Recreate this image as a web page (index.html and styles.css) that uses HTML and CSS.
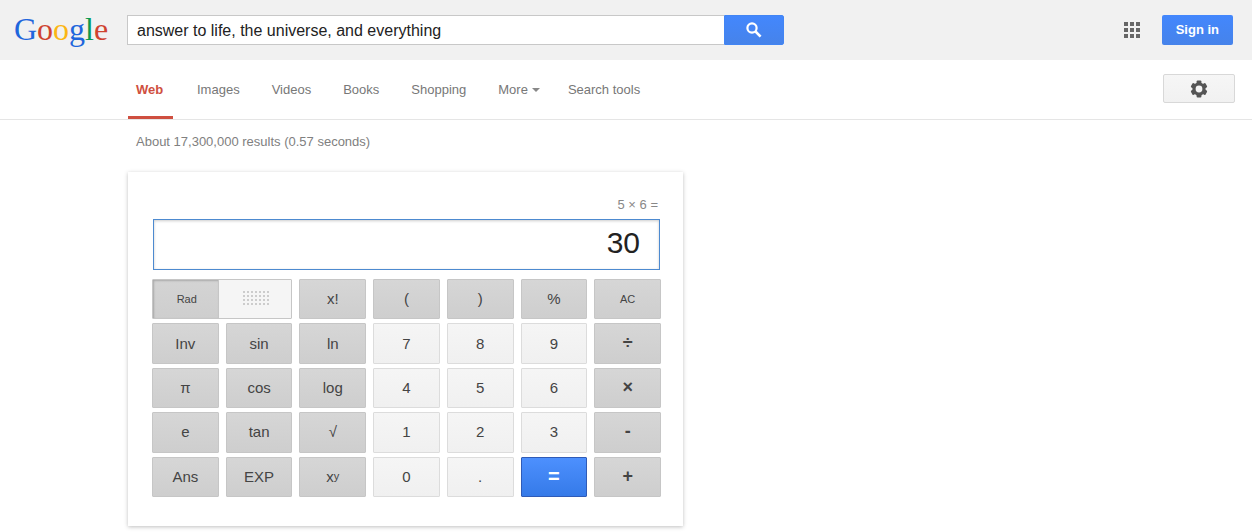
FILE: index.html
```html
<!DOCTYPE html>
<html lang="en">
<head>
    <meta charset="UTF-8">
    <meta name="viewport" content="width=device-width, initial-scale=1.0">
    <title>answer to life, the universe, and everything - Google Search</title>
    <link rel="stylesheet" href="styles.css">
</head>
<body>

    <header class="top-bar">
        <a class="logo" href="#"><span class="blue">G</span><span class="red">o</span><span class="yellow">o</span><span class="blue">g</span><span class="green">l</span><span class="red">e</span></a>

        <form class="search">
            <input class="search-box" type="text" aria-label="Search" value="answer to life, the universe, and everything">
            <button class="search-btn" type="submit" aria-label="Search">
                <svg width="16" height="16" viewBox="0 0 16 16">
                    <circle cx="6" cy="6" r="4.6" fill="none" stroke="#fff" stroke-width="2.2"/>
                    <path d="M9 9 L14.6 14.6" stroke="#fff" stroke-width="2.6"/>
                </svg>
            </button>
        </form>

        <div class="account">
            <button class="apps-btn" type="button" aria-label="Apps">
                <svg width="16" height="16" viewBox="0 0 16 16" fill="#666">
                    <path d="M0 0h4v4H0zM6 0h4v4H6zM12 0h4v4h-4zM0 6h4v4H0zM6 6h4v4H6zM12 6h4v4h-4zM0 12h4v4H0zM6 12h4v4H6zM12 12h4v4h-4z"/>
                </svg>
            </button>
            <a class="sign-in" href="#">Sign in</a>
        </div>
    </header>

    <div class="nav-bar">
        <nav class="tabs">
            <a class="tab active" href="#">Web</a>
            <a class="tab" href="#">Images</a>
            <a class="tab" href="#">Videos</a>
            <a class="tab" href="#">Books</a>
            <a class="tab" href="#">Shopping</a>
            <a class="tab more" href="#">More</a>
            <a class="tab" href="#">Search tools</a>
        </nav>
        <button class="settings-btn" type="button" aria-label="Settings">
            <svg width="18" height="18" viewBox="0 0 18 18">
                <g fill="#555">
                    <rect x="6.6" y="0.6" width="4.8" height="16.8" rx="1"/>
                    <rect x="6.6" y="0.6" width="4.8" height="16.8" rx="1" transform="rotate(60 9 9)"/>
                    <rect x="6.6" y="0.6" width="4.8" height="16.8" rx="1" transform="rotate(120 9 9)"/>
                    <circle cx="9" cy="9" r="6.6"/>
                </g>
                <circle cx="9" cy="9" r="3.4" fill="#f4f4f4"/>
            </svg>
        </button>
    </div>

    <main class="results">
        <p class="stats">About 17,300,000 results (0.57 seconds)</p>

        <section class="calculator">
            <label class="expression" for="display">5 × 6 =</label>
            <input class="display" id="display" type="text" value="30" readonly>

            <div class="keys">
                <div class="angle">
                    <button class="angle-on" type="button">Rad</button>
                    <button class="angle-off" type="button" aria-label="Degrees"><span class="grip"></span></button>
                </div>
                <button class="key" type="button">x!</button>
                <button class="key" type="button">(</button>
                <button class="key" type="button">)</button>
                <button class="key" type="button">%</button>
                <button class="key small" type="button">AC</button>

                <button class="key" type="button">Inv</button>
                <button class="key" type="button">sin</button>
                <button class="key" type="button">ln</button>
                <button class="key number" type="button">7</button>
                <button class="key number" type="button">8</button>
                <button class="key number" type="button">9</button>
                <button class="key operator" type="button">÷</button>

                <button class="key" type="button">π</button>
                <button class="key" type="button">cos</button>
                <button class="key" type="button">log</button>
                <button class="key number" type="button">4</button>
                <button class="key number" type="button">5</button>
                <button class="key number" type="button">6</button>
                <button class="key operator" type="button">×</button>

                <button class="key" type="button">e</button>
                <button class="key" type="button">tan</button>
                <button class="key" type="button">√</button>
                <button class="key number" type="button">1</button>
                <button class="key number" type="button">2</button>
                <button class="key number" type="button">3</button>
                <button class="key operator" type="button">-</button>

                <button class="key" type="button">Ans</button>
                <button class="key" type="button">EXP</button>
                <button class="key" type="button">x<span class="power">y</span></button>
                <button class="key number" type="button">0</button>
                <button class="key number" type="button">.</button>
                <button class="key equals" type="button">=</button>
                <button class="key operator" type="button">+</button>
            </div>
        </section>
    </main>

</body>
</html>
```
FILE: styles.css
```css
* { box-sizing: border-box; }

body {
    margin: 0;
    font-family: "Liberation Sans", Arial, sans-serif;
    font-size: 13px;
    color: #222;
    background: white;
}

a { text-decoration: none; }

button {
    padding: 0;
    font-family: inherit;
    cursor: pointer;
}

svg { display: block; }

/* Top bar */
.top-bar {
    display: flex;
    align-items: center;
    height: 60px;
    padding-left: 14px;
    padding-right: 19px;
    background: #f1f1f1;
}
.logo {
    flex: 0 0 113px;
    padding-bottom: 2px;
    font-family: "Liberation Serif", "Times New Roman", serif;
    font-size: 32px;
    line-height: 36px;
}
.blue { color: #1f66dc; }
.red { color: #cf4330; }
.yellow { color: #fbb614; }
.green { color: #0a9a51; }

.search {
    display: flex;
    flex: 0 1 657px;
    height: 30px;
}
.search-box {
    flex: 1;
    min-width: 0;
    padding: 2px 9px 0;
    border: 1px solid #c8c8c8;
    border-right: none;
    font-family: inherit;
    font-size: 16px;
    color: #222;
    background: white;
}
.search-btn {
    display: flex;
    align-items: center;
    justify-content: center;
    width: 60px;
    border: 1px solid #4285f4;
    border-radius: 0 2px 2px 0;
    background: linear-gradient(#4387fd, #4683ea);
}
.account {
    display: flex;
    align-items: center;
    gap: 22px;
    margin-left: auto;
}
.apps-btn {
    border: none;
    background: none;
}
.sign-in {
    padding: 0 14px;
    border-radius: 2px;
    font-weight: bold;
    line-height: 30px;
    color: white;
    background: linear-gradient(#4387fd, #4683ea);
}

/* Tabs */
.nav-bar {
    display: flex;
    align-items: center;
    justify-content: space-between;
    height: 60px;
    padding-left: 128px;
    padding-right: 17px;
    border-bottom: 1px solid #e5e5e5;
}
.tabs {
    display: flex;
    gap: 16px;
}
.tab {
    min-width: 45px;
    height: 59px;
    padding: 0 8px;
    line-height: 59px;
    color: #777;
}
.tab.active {
    border-bottom: 3px solid #cf4f40;
    font-weight: bold;
    color: #cf4f40;
}
.tab.more { padding-right: 4px; }
.more::after {
    content: "";
    display: inline-block;
    margin-left: 4px;
    vertical-align: 2px;
    border: 4px solid transparent;
    border-top-color: #888;
    border-bottom: none;
}
.settings-btn {
    display: flex;
    align-items: center;
    justify-content: center;
    width: 72px;
    height: 29px;
    margin-bottom: 2px;
    border: 1px solid #d8d8d8;
    border-radius: 2px;
    background: linear-gradient(#f6f6f6, #f1f1f1);
}

/* Results */
.results {
    padding-left: 128px;
    padding-bottom: 6px;
}
.stats {
    margin: 0;
    padding: 14px 8px 22px;
    line-height: 16px;
    color: #808080;
}

/* Calculator */
.calculator {
    max-width: 555px;
    padding: 24px 22px 29px 24px;
    box-shadow: 0 1px 4px rgba(0,0,0,0.25);
}
.expression {
    display: block;
    padding-right: 3px;
    line-height: 18px;
    text-align: right;
    color: #888;
}
.display {
    display: block;
    width: calc(100% - 2px);
    height: 51px;
    margin: 5px 1px 9px;
    padding: 0 19px 4px;
    border: 1px solid #4d8ad0;
    box-shadow: inset 0 1px 3px rgba(0,0,0,0.2);
    font-family: inherit;
    font-size: 30px;
    text-align: right;
    color: #222;
}
.keys {
    display: grid;
    grid-template-columns: repeat(7, 1fr);
    grid-template-rows: repeat(5, 1fr);
    gap: 4px 7px;
    height: 218px;
}
.key {
    min-width: 0;
    padding-bottom: 1px;
    border: 1px solid #c6c6c6;
    border-radius: 1px;
    font-size: 15px;
    color: #444;
    background: linear-gradient(#d6d6d6, #cecece);
}
.small { font-size: 11px; }
.number {
    border-color: #dcdcdc;
    background: linear-gradient(#f5f5f5, #f0f0f0);
}
.operator {
    font-size: 18px;
    font-weight: bold;
}
.equals {
    border-color: #2f5bb7;
    font-size: 20px;
    font-weight: bold;
    color: white;
    background: linear-gradient(#4d90fe, #357ae8);
}
.power {
    font-size: 11px;
    vertical-align: 2px;
}

.angle {
    display: flex;
    grid-column: span 2;
    border: 1px solid #c6c6c6;
    border-radius: 1px;
}
.angle button {
    border: none;
    font-size: 11px;
    color: #444;
}
.angle .angle-on {
    width: 48%;
    padding: 0 0 1px 2px;
    border-right: 1px solid #c6c6c6;
    background: linear-gradient(#d4d4d4, #cecece);
    box-shadow: inset 1px 1px 2px rgba(0,0,0,0.2);
}
.angle .angle-off {
    flex: 1;
    background: #f5f5f5;
}
/* 7 x 4 dots */
.grip {
    display: block;
    width: 28px;
    height: 16px;
    margin: 0 auto;
    background: conic-gradient(from 90deg at 2px 2px, transparent 270deg, #ccc 0) 0 0 / 4px 4px;
}
```
